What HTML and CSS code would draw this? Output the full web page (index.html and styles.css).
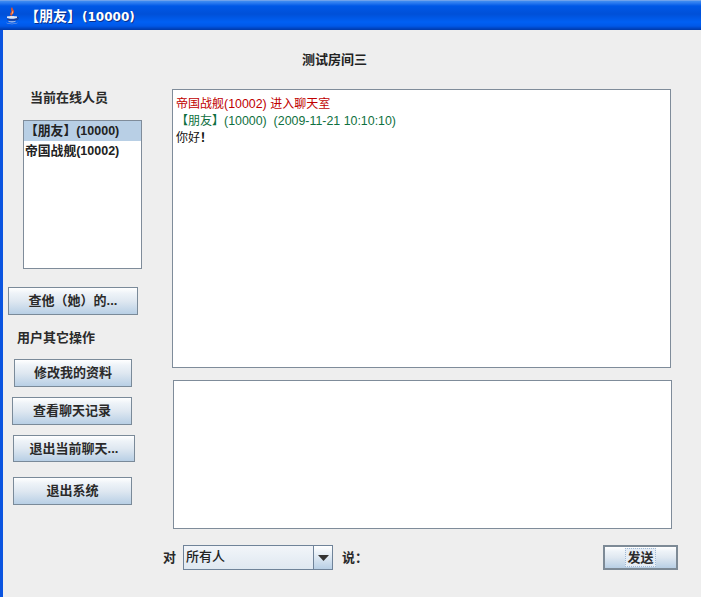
FILE: index.html
```html
<!DOCTYPE html>
<html lang="zh">
<head>
<meta charset="utf-8">
<title>【朋友】(10000)</title>
<link rel="stylesheet" href="styles.css">
</head>
<body>
<div class="window">
  <header class="titlebar">
    <svg class="java-icon" width="16" height="18" viewBox="0 0 16 18">
      <path d="M8 0C5.500 2.500 9 4 6.500 6 5.500 7.500 6.500 8.500 8 9 7.500 7.500 10.500 6.500 10 4 9.700 3 8.500 1.500 8 0Z" fill="#e2542a"/>
      <path d="M8 3.500C8.500 5 7.500 6 7.800 7.500 9 6.500 9.300 5 8 3.500Z" fill="#f6d0a0"/>
      <path d="M3 9.500C5 8.700 11 8.700 13 9.500V11C11 12 5 12 3 11Z" fill="#dfe4f2"/>
      <path d="M3 11.500C5 12.500 11 12.500 13 11.500L12.500 13C10.500 13.800 5.500 13.800 3.500 13Z" fill="#27397c"/>
      <path d="M4 13.800C6 14.500 10 14.500 12 13.800L11 15C9 15.500 7 15.500 5 15Z" fill="#b9c6e6"/>
      <path d="M13 9.800C15.500 9.800 15.300 12.800 12.300 13.300L12.500 12.500C13.800 12.200 14.200 10.900 13 10.800Z" fill="#27397c"/>
      <path d="M2 15.500C5 17 11 17 14 15.500 12.500 17.800 3.500 17.800 2 15.500Z" fill="#8fa3d8"/>
    </svg>
    <span class="title-text"><span class="title-cn">【朋友】</span>(10000)</span>
  </header>
  <div class="content">
    <div class="room-title">测试房间三</div>
    <div class="main">
      <aside class="side">
        <div class="label online-label">当前在线人员</div>
        <ul class="user-list">
          <li class="user selected"><span class="cn-list">【朋友】</span>(10000)</li>
          <li class="user"><span class="cn-list">帝国战舰</span>(10002)</li>
        </ul>
        <button class="btn btn-lookup">查他（她）的...</button>
        <div class="label ops-label">用户其它操作</div>
        <button class="btn btn-edit">修改我的资料</button>
        <button class="btn btn-history">查看聊天记录</button>
        <button class="btn btn-leave">退出当前聊天...</button>
        <button class="btn btn-exit">退出系统</button>
      </aside>
      <section class="chat">
        <div class="log">
          <p class="line red"><span class="cn-log">帝国战舰</span>(10002) <span class="cn-log">进入聊天室</span></p>
          <p class="line green"><span class="cn-log">【朋友】</span>(10000)&nbsp; (2009-11-21 10:10:10)</p>
          <p class="line black"><span class="cn-log">你好<b class="bang">！</b></span></p>
        </div>
        <div class="input"></div>
        <div class="send-row">
          <span class="label to">对</span>
          <div class="combo">
            <span class="combo-value">所有人</span>
            <span class="combo-arrow"><svg width="11" height="6" viewBox="0 0 11 6"><path d="M0 0H11L5.500 6Z" fill="#333"/></svg></span>
          </div>
          <span class="label say">说：</span>
          <button class="btn btn-send"><span class="focus">发送</span></button>
        </div>
      </section>
    </div>
  </div>
</div>
</body>
</html>
```
FILE: styles.css
```css
* { box-sizing: border-box; }
html, body { margin: 0; padding: 0; }
body {
  width: 701px;
  height: 597px;
  overflow: hidden;
  background: #eeeeee;
  font-family: "Liberation Sans", "Noto Sans CJK SC", sans-serif;
  font-size: 13px;
  color: #222;
}
.window {
  height: 597px;
  border-left: 3px solid #0a54e0;
  display: flex;
  flex-direction: column;
  background: #eeeeee;
}
.titlebar {
  height: 30px;
  margin-left: -3px;
  padding-left: 4px;
  display: flex;
  align-items: center;
  gap: 5px;
  background: linear-gradient(to bottom, #9fb8e8 0, #3f8cf0 1px, #2a7af0 3px, #0058e6 6px, #0050d8 14px, #0060f4 22px, #0058e8 26px, #0040b8 29px, #003aa8 30px);
}
.java-icon { flex: none; margin-top: 2px; }
.title-text {
  color: #fff;
  font-family: "DejaVu Sans", "Noto Sans CJK SC", sans-serif;
  font-weight: 700;
  font-size: 12px;
  line-height: 16px;
  text-shadow: 1px 1px 0 #0a2f8c;
  margin-top: 2px;
}
.title-cn { font-size: 14px; font-family: "Noto Sans CJK SC", sans-serif; margin-right: 1px; }
.content { flex: 1; display: flex; flex-direction: column; }
.room-title {
  height: 59px;
  padding: 22px 0 0 299px;
  font-weight: 700;
  line-height: 15px;
}
.main { display: flex; }
.side { width: 169px; flex: none; display: flex; flex-direction: column; align-items: flex-start; }
.label { font-weight: 700; line-height: 15px; color: #2a2a2a; }
.online-label { margin: 1px 0 0 27px; }
.user-list {
  list-style: none;
  margin: 15px 0 0 20px;
  padding: 0;
  width: 119px;
  height: 149px;
  background: #fff;
  border: 1px solid #7f8c9a;
}
.user { height: 20px; line-height: 19px; font-weight: 700; font-size: 12.500px; white-space: nowrap; padding-left: 1px; }
.cn-list { font-size: 12.800px; }
.selected { background: #b8cfe5; }
.btn {
  display: block;
  padding: 0 0 3px;
  font: 700 13px "Liberation Sans", "Noto Sans CJK SC", sans-serif;
  color: #2a2a2a;
  border: 1px solid #7a8a99;
  background: linear-gradient(to bottom, #fff 0, #eef3f8 20%, #dfe8f1 50%, #b8cfe5 100%);
  white-space: nowrap;
}
.btn-lookup { width: 130px; height: 28px; margin: 18px 0 0 5px; }
.ops-label { margin: 15px 0 0 14px; }
.btn-edit { width: 118px; height: 28px; margin: 14px 0 0 11px; }
.btn-history { width: 120px; height: 28px; margin: 10px 0 0 9px; }
.btn-leave { width: 122px; height: 27px; margin: 10px 0 0 10px; }
.btn-exit { width: 119px; height: 28px; margin: 15px 0 0 10px; }
.chat { flex: 1; }
.log {
  width: 499px;
  height: 279px;
  background: #fff;
  border: 1px solid #7f8c9a;
  padding: 6px 3px;
  font-size: 12.400px;
}
.cn-log { font-size: 12px; }
.bang { font-weight: 700; }
.line { margin: 0; height: 17px; line-height: 17px; white-space: nowrap; }
.red { color: #c00000; }
.green { color: #0f7040; }
.black { color: #111; }
.input {
  width: 499px;
  height: 149px;
  margin: 12px 0 0 1px;
  background: #fff;
  border: 1px solid #7f8c9a;
}
.send-row { display: flex; align-items: center; margin-top: 16px; height: 25px; }
.to { margin-left: -9px; width: 20px; }
.combo {
  width: 150px;
  height: 25px;
  display: flex;
  border: 1px solid #6f8399;
  background: linear-gradient(to bottom, #f2f5f9, #dfe8f1);
}
.combo-value { flex: 1; line-height: 21px; padding-left: 2px; font-weight: 500; color: #222; }
.combo-arrow {
  width: 19px;
  display: flex;
  align-items: center;
  justify-content: center;
  border-left: 1px solid #6f8399;
  background: linear-gradient(to bottom, #fff, #b8cfe5);
}
.say { margin-left: 9px; width: 261px; }
.btn-send {
  width: 75px;
  height: 25px;
  border: 2px solid #7d8a96;
  padding: 0;
}
.focus { display: inline-block; border: 1px dotted #9fb8d4; padding: 0 1px; line-height: 17px; background: #e6edf5; }
```
